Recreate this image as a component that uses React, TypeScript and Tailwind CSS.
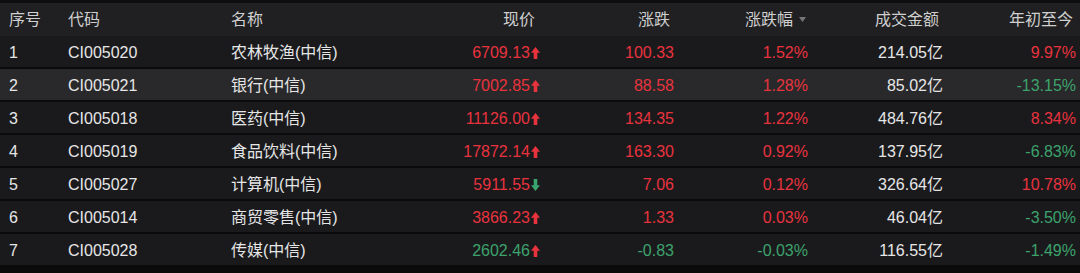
import React from "react";

type Row = {
  idx: number;
  code: string;
  name: string;
  price: string;
  up: boolean;
  priceColor: "r" | "g";
  chg: string;
  chgColor: "r" | "g";
  pct: string;
  amt: string;
  ytd: string;
  ytdColor: "r" | "g";
};

const rows: Row[] = [
  { idx: 1, code: "CI005020", name: "农林牧渔(中信)", price: "6709.13", up: true, priceColor: "r", chg: "100.33", chgColor: "r", pct: "1.52%", amt: "214.05亿", ytd: "9.97%", ytdColor: "r" },
  { idx: 2, code: "CI005021", name: "银行(中信)", price: "7002.85", up: true, priceColor: "r", chg: "88.58", chgColor: "r", pct: "1.28%", amt: "85.02亿", ytd: "-13.15%", ytdColor: "g" },
  { idx: 3, code: "CI005018", name: "医药(中信)", price: "11126.00", up: true, priceColor: "r", chg: "134.35", chgColor: "r", pct: "1.22%", amt: "484.76亿", ytd: "8.34%", ytdColor: "r" },
  { idx: 4, code: "CI005019", name: "食品饮料(中信)", price: "17872.14", up: true, priceColor: "r", chg: "163.30", chgColor: "r", pct: "0.92%", amt: "137.95亿", ytd: "-6.83%", ytdColor: "g" },
  { idx: 5, code: "CI005027", name: "计算机(中信)", price: "5911.55", up: false, priceColor: "r", chg: "7.06", chgColor: "r", pct: "0.12%", amt: "326.64亿", ytd: "10.78%", ytdColor: "r" },
  { idx: 6, code: "CI005014", name: "商贸零售(中信)", price: "3866.23", up: true, priceColor: "r", chg: "1.33", chgColor: "r", pct: "0.03%", amt: "46.04亿", ytd: "-3.50%", ytdColor: "g" },
  { idx: 7, code: "CI005028", name: "传媒(中信)", price: "2602.46", up: true, priceColor: "g", chg: "-0.83", chgColor: "g", pct: "-0.03%", amt: "116.55亿", ytd: "-1.49%", ytdColor: "g" },
];

function Arrow({ up }: { up: boolean }) {
  const color = up ? "#e8333d" : "#3aa56c";
  return (
    <svg width="9" height="12" viewBox="0 0 9 12" className="ml-[1px] shrink-0">
      {up ? (
        <path d="M4.5 0 L9 5.8 L6.3 5.8 L6.3 12 L2.7 12 L2.7 5.8 L0 5.8 Z" fill={color} />
      ) : (
        <path d="M4.5 12 L9 6.2 L6.3 6.2 L6.3 0 L2.7 0 L2.7 6.2 L0 6.2 Z" fill={color} />
      )}
    </svg>
  );
}

const red = "text-[#e8333d]";
const green = "text-[#3da26c]";
const cls = (c: "r" | "g") => (c === "r" ? red : green);

const grid =
  "grid grid-cols-[59px_163px_180px_138px_134px_134px_135px_133px] pr-[4px]";

export default function App() {
  return (
    <div
      className="w-[1080px] h-[273px] bg-[#0b0b0c] overflow-hidden text-[16px] leading-none"
      style={{ fontFamily: '"Liberation Sans", "Noto Sans CJK SC", Arial, sans-serif' }}
    >
      <div className="h-[3px] bg-[#0e0e10]" />
      <div className={`${grid} h-[33px] items-center bg-[#202022] text-[#cfcfcf]`}>
        <div className="pl-[9px]">序号</div>
        <div className="pl-[9px]">代码</div>
        <div className="pl-[9px]">名称</div>
        <div className="text-right pr-[5px]">现价</div>
        <div className="text-right pr-[4px]">涨跌</div>
        <div className="flex items-center justify-end pr-[2px]">
          <span>涨跌幅</span>
          <svg width="7" height="5" viewBox="0 0 7 5" className="ml-[6px]">
            <path d="M0 0 L7 0 L3.5 5 Z" fill="#77777a" />
          </svg>
        </div>
        <div className="text-right pr-[4px]">成交金额</div>
        <div className="text-right pr-[3px]">年初至今</div>
      </div>
      {rows.map((r) => (
        <div
          key={r.idx}
          className={`${grid} h-[33px] pt-[2px] items-center border-b-2 border-[#0b0b0c] ${
            r.idx === 2 ? "bg-[#29292b]" : "bg-[#1a1a1d]"
          } text-[#e6e6e6]`}
        >
          <div className="pl-[9px]">{r.idx}</div>
          <div className="pl-[9px]">{r.code}</div>
          <div className="pl-[9px]">{r.name}</div>
          <div className={`flex items-center justify-end ${cls(r.priceColor)}`}>
            <span>{r.price}</span>
            <Arrow up={r.up} />
          </div>
          <div className={`text-right ${cls(r.chgColor)}`}>{r.chg}</div>
          <div className={`text-right ${r.pct.startsWith("-") ? green : red}`}>{r.pct}</div>
          <div className="text-right">{r.amt}</div>
          <div className={`text-right ${cls(r.ytdColor)}`}>{r.ytd}</div>
        </div>
      ))}
    </div>
  );
}
